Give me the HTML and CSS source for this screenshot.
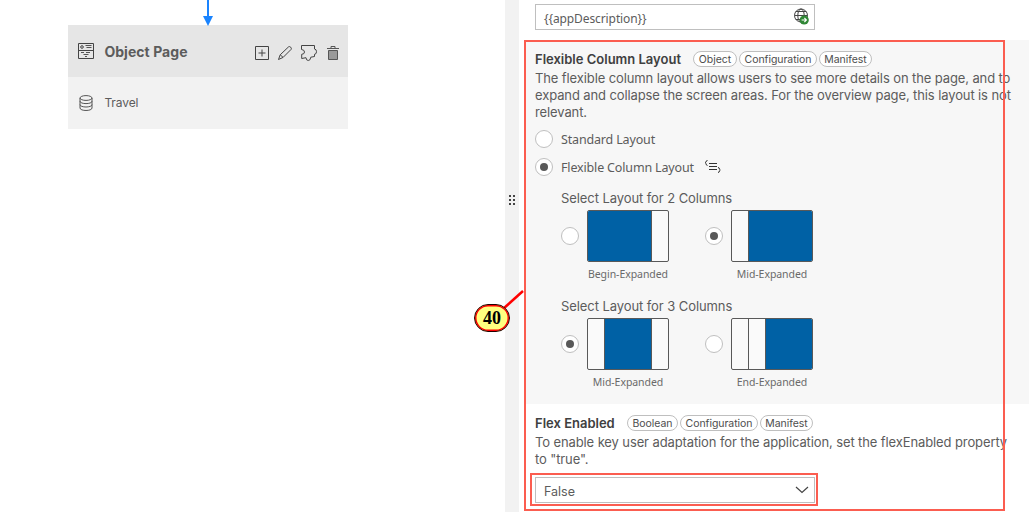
FILE: index.html
```
<!DOCTYPE html>
<html lang="en">
<head>
<meta charset="utf-8">
<title>Page Map</title>
<link rel="stylesheet" href="styles.css">
</head>
<body>
<div class="app">
  <main class="canvas">
    <svg class="arrow" width="12" height="26" viewBox="0 0 12 26"><path d="M6 0V18" stroke="#1a84ff" stroke-width="2"/><path d="M1 16H11L6 26Z" fill="#1a84ff"/></svg>
    <article class="node">
      <header class="node-head">
        <svg width="16" height="16" viewBox="0 0 16 16" fill="none" stroke="#444"><path d="M.5.5H15.5V15.5H.5ZM.5 7.5H15.5"/><circle cx="4" cy="4" r="1.3"/><path d="M7.5 2.5H13.5M8.5 4.5H13.5M3 9.5H6M8 9.5H12M5.5 11.5H10.5M7 13.5H9" stroke-width=".9"/></svg>
        <h2 class="node-title">Object Page</h2>
        <div class="node-actions">
          <svg width="16" height="16" viewBox="0 0 16 16" fill="none" stroke="#444"><path d="M1.5 1.5H14.5V14.5H1.5ZM8 4.5V11.5M4.5 8H11.5"/></svg>
          <svg width="16" height="16" viewBox="0 0 16 16" fill="none" stroke="#444"><path d="M1.5 14.5L3.2 9.8L11.5 1.9Q12.6 1.1 13.7 2.2T14.1 4.4L6.1 12.4ZM3.2 9.8L6.1 12.4"/></svg>
          <svg width="18" height="18" viewBox="0 0 18 18" fill="none" stroke="#444"><path d="M1.5 1.5H14.5V5Q16.5 5.2 16.5 7.7T14.5 10.3V12.5L10.8 13.2Q10.5 16.5 8.3 16.5T6 13.7L1.7 14.5V10.3Q4.5 10.2 4.5 8T1.5 5.5Z"/></svg>
          <svg width="16" height="16" viewBox="0 0 16 16" fill="none" stroke="#555"><path d="M3.5 5.5H12.5V14.5H3.5Z" fill="#999"/><path d="M2 3.5H14M6 3V1.5H10V3"/></svg>
        </div>
      </header>
      <div class="node-row">
        <svg width="16" height="16" viewBox="0 0 16 16" fill="none" stroke="#555"><ellipse cx="8" cy="3" rx="6" ry="2.4"/><path d="M2 3V13C2 16.3 14 16.3 14 13V3M2 6.2C2 9.4 14 9.4 14 6.2M2 9.6C2 12.8 14 12.8 14 9.6"/></svg>
        <span class="node-label">Travel</span>
      </div>
    </article>
  </main>
  <div class="splitter"><svg width="6" height="10" viewBox="0 0 6 10" fill="#444"><path d="M0 0H2V2H0ZM4 0H6V2H4ZM0 4H2V6H0ZM4 4H6V6H4ZM0 8H2V10H0ZM4 8H6V10H4Z"/></svg></div>
  <aside class="panel">
    <div class="field">
      <span class="field-text">{{appDescription}}</span>
      <svg width="18" height="18" viewBox="0 0 18 18" fill="none"><g stroke="#444"><circle cx="9" cy="7.5" r="6.5"/><ellipse cx="9" cy="7.5" rx="3.2" ry="6.5"/><path d="M2.5 7.5H15.5M3.8 3.5H14.2M3.8 11.5H10"/></g><circle cx="12.2" cy="12" r="4.6" fill="#308735"/><path d="M9.6 12H14.4M12.4 10L14.4 12L12.4 14" stroke="#fff" stroke-width="1.1"/></svg>
    </div>
    <section class="section shaded">
      <div class="title-row"><h3 class="title">Flexible Column Layout</h3><span class="tag object">Object</span><span class="tag config">Configuration</span><span class="tag manifest">Manifest</span></div>
      <p class="desc">The flexible column layout allows users to see more details on the page, and to<br>expand and collapse the screen areas. For the overview page, this layout is not<br>relevant.</p>
      <div class="choices">
        <div class="choice"><i class="radio"></i><span class="choice-label">Standard Layout</span></div>
        <div class="choice"><i class="radio on"></i><span class="choice-label">Flexible Column Layout</span><svg class="wrap" width="18" height="16" viewBox="0 0 18 16" fill="none" stroke="#333"><path d="M5 4.5H13M5 7.5H13M5 10.5H13"/><path d="M3.5 1.5Q2 1.5 2 3L1.2 3.7L2 4.4Q2 6.5 3.5 6.5M14 8.5Q15.5 8.5 15.5 10.3L16.3 11L15.5 11.7Q15.5 13.5 14 13.5"/></svg></div>
      </div>
      <div class="group">
        <h4 class="subtitle">Select Layout for 2 Columns</h4>
        <div class="options">
          <div class="option"><i class="radio"></i><div class="preview"><b class="wide"></b><b class="end"></b></div><span class="caption">Begin-Expanded</span></div>
          <div class="option"><i class="radio on"></i><div class="preview"><b></b><b class="wide"></b></div><span class="caption">Mid-Expanded</span></div>
        </div>
      </div>
      <div class="group">
        <h4 class="subtitle">Select Layout for 3 Columns</h4>
        <div class="options">
          <div class="option"><i class="radio on"></i><div class="preview"><b></b><b class="wide"></b><b class="end"></b></div><span class="caption">Mid-Expanded</span></div>
          <div class="option"><i class="radio"></i><div class="preview"><b></b><b class="middle"></b><b class="wide"></b></div><span class="caption">End-Expanded</span></div>
        </div>
      </div>
    </section>
    <section class="section">
      <div class="title-row"><h3 class="title short">Flex Enabled</h3><span class="tag boolean">Boolean</span><span class="tag config">Configuration</span><span class="tag manifest">Manifest</span></div>
      <p class="desc">To enable key user adaptation for the application, set the flexEnabled property<br>to "true".</p>
      <div class="field select"><span class="select-text">False</span><svg width="14" height="8" viewBox="0 0 14 8" fill="none" stroke="#444" stroke-width="1.2"><path d="M1 1L7 6.5L13 1"/></svg></div>
    </section>
  </aside>
  <div class="highlight outer"></div>
  <div class="highlight inner"></div>
  <svg class="leader" width="24" height="22" viewBox="0 0 24 22"><path d="M1 20L21 2" stroke="#f00" stroke-width="2.5"/></svg>
  <div class="callout">40</div>
</div>
</body>
</html>
```
FILE: styles.css
```
* { box-sizing: border-box; }
body { margin: 0; background: #fff; font-family: Inter, sans-serif; color: #5c5c5c; }
h2, h3, h4, p { margin: 0; }
svg { display: block; flex: none; }
.app { position: relative; display: grid; grid-template-columns: 505px 14px 1fr; width: 1034px; height: 512px; overflow: hidden; }
.canvas { padding-left: 68.4px; }
.arrow { margin-left: 134px; }
.node { width: 280px; margin-top: -1px; background: #f2f2f2; }
.node-head { display: flex; align-items: center; height: 52px; padding: 0 7px 0 10px; background: #e6e6e6; }
.node-title { margin: 2px 0 0 10px; font-size: 14px; font-weight: 700; line-height: 18px; letter-spacing: .05px; white-space: nowrap; }
.node-actions { display: flex; align-items: center; gap: 7px; margin: 4px 0 0 auto; }
.node-row { display: flex; align-items: center; gap: 10px; height: 52px; padding-left: 10px; }
.node-label { margin-top: -1px; font-size: 12px; letter-spacing: -.1px; }
.splitter { display: flex; justify-content: center; padding-top: 195px; background: #f2f2f2; }
.panel { padding: 4px 5px 0 6px; white-space: nowrap; }
.field { display: flex; align-items: center; justify-content: space-between; width: 280px; height: 26px; margin: 0 0 10px 10px; padding: 0 4px 0 8px; border: 1px solid #bfbfbf; background: #fff; }
.field-text { padding-top: 3px; font: 12px/20px "Noto Sans", sans-serif; letter-spacing: -.1px; }
.section { padding: 10px 0 0 10px; }
.shaded { height: 364px; background: #f7f7f7; }
.title-row { display: flex; align-items: center; height: 18px; }
.title { width: 158px; font-size: 13px; font-weight: 600; color: #404040; line-height: 18px; }
.short { width: 92px; }
.tag { display: flex; align-items: center; justify-content: center; height: 16px; margin-right: 2px; border: 1px solid #bfbfbf; border-radius: 8px; background: #fff; font-size: 10.5px; letter-spacing: -.05px; color: #4d4d4d; }
.object { width: 44px; }
.config { width: 78px; }
.manifest { width: 53px; }
.boolean { width: 51px; }
.desc { margin-top: 2px; font-size: 13px; line-height: 17px; letter-spacing: -.11px; }
.choices { display: grid; gap: 10px; margin-top: 9px; }
.choice { display: flex; align-items: center; gap: 8px; height: 18px; font: 12.5px/18px "Noto Sans", sans-serif; letter-spacing: -.16px; }
.choice-label { padding-top: 2px; }
.wrap { margin-left: 2px; }
.radio { flex: none; display: grid; place-items: center; width: 18px; height: 18px; border: 1px solid #bfbfbf; border-radius: 50%; background: #fff; }
.on::after { content: ""; width: 8px; height: 8px; border-radius: 50%; background: #595959; }
.group { height: 108px; padding: 14px 0 0 26px; }
.subtitle { font-size: 13px; font-weight: 400; line-height: 17px; letter-spacing: -.08px; }
.options { display: grid; grid-template-columns: 144px 144px; margin-top: 3px; }
.option { display: grid; grid-template-columns: 18px 82px; column-gap: 8px; align-items: center; }
.preview { display: flex; height: 52px; border: 1px solid #595959; border-radius: 2px; background: #fafafa; overflow: hidden; }
.preview b { width: 16px; }
.preview b + b { border-left: 1px solid #595959; }
.preview .end, .preview .middle { width: 17px; }
.preview .wide { flex: 1; background: #0061a5; }
.caption { grid-column: 2; justify-self: center; font: 10.5px/16px "Noto Sans", sans-serif; letter-spacing: -.06px; margin-top: 4px; color: #6a6a6a; }
.select { margin: 9px 0 0; padding-right: 5px; }
.select-text { padding-top: 2px; font-size: 12.5px; }
.highlight { position: absolute; border: 2px solid #fb5d50; }
.outer { left: 524px; top: 40px; width: 481px; height: 471px; }
.inner { left: 530px; top: 473px; width: 288px; height: 33px; }
.leader { position: absolute; left: 502px; top: 289px; }
.callout { position: absolute; left: 474px; top: 304px; width: 36px; height: 28px; border: 1px solid #200; border-radius: 14px; box-shadow: inset 0 0 0 1.5px #f00; background: #ffff80; color: #000; font: bold 18px/26px "Liberation Serif", serif; text-align: center; }
```
